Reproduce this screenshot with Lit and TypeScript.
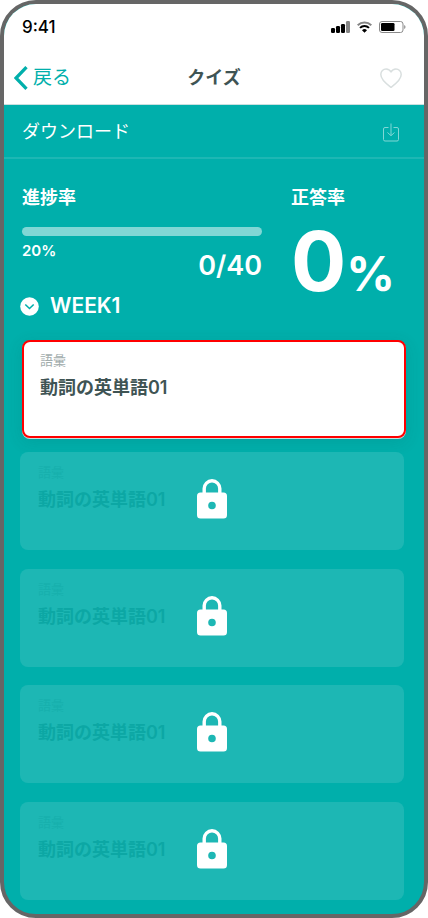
import { LitElement, html, css, svg } from "lit";
import { customElement, property } from "lit/decorators.js";

const lockIcon = svg`<svg class="lock" width="32" height="40" viewBox="0 0 32 40" aria-hidden="true">
  <path d="M8.2 15 V9.6 A7.8 7.8 0 0 1 23.8 9.6 V15" fill="none" stroke="#fff" stroke-width="3.4"/>
  <path fill="#fff" fill-rule="evenodd" d="M4.500 13.500 H27.500 A3.500 3.500 0 0 1 31 17 V36 A3.500 3.500 0 0 1 27.500 39.500 H4.500 A3.500 3.500 0 0 1 1 36 V17 A3.500 3.500 0 0 1 4.500 13.500 Z M16 22.700 a3.800 3.800 0 1 0 0 7.600 a3.800 3.800 0 1 0 0 -7.600 Z"/>
</svg>`;

@customElement("quiz-card")
export class QuizCard extends LitElement {
  @property() category = "";
  @property() name = "";
  @property({ type: Boolean, reflect: true }) locked = false;

  static styles = css`
    :host {
      display: block;
    }
    .card {
      position: relative;
      display: flex;
      flex-direction: column;
      align-items: flex-start;
      box-sizing: border-box;
      width: 100%;
      height: 98px;
      margin: 0;
      padding: 9px 16px;
      border: 2px solid #f00;
      border-radius: 8px;
      background: #fff;
      color: #3f5454;
      font-family: inherit;
      text-align: left;
      box-shadow: 0 1px 0 #c5dede, 0 4px 16px rgba(0, 80, 80, 0.14);
    }
    .category {
      color: #a2adad;
      font-size: 13px;
      line-height: 18px;
    }
    .name {
      margin-top: 6px;
      font-size: 18px;
      line-height: 26px;
      font-weight: 600;
    }
    :host([locked]) .card {
      border-color: transparent;
      background: #1db7b4;
      background-clip: border-box;
      color: #0ca7a4;
      box-shadow: none;
    }
    :host([locked]) .category {
      color: #17b0ad;
    }
    .lock {
      position: absolute;
      left: 50%;
      top: 50%;
      margin: -22px 0 0 -16px;
    }
  `;

  render() {
    return html`<button class="card" ?disabled=${this.locked}>
      <span class="category">${this.category}</span>
      <span class="name">${this.name}</span>
      ${this.locked ? lockIcon : null}
    </button>`;
  }
}

@customElement("app-root")
export class AppRoot extends LitElement {
  static styles = css`
    :host {
      display: block;
      font-family: Inter, "Noto Sans CJK JP", sans-serif;
    }
    .phone {
      display: flex;
      flex-direction: column;
      box-sizing: border-box;
      min-height: 100vh;
      border: 4px solid #666;
      border-radius: 36px;
      background: #00afab;
      color: #fff;
      overflow: hidden;
    }
    button {
      margin: 0;
      padding: 0;
      border: 0;
      background: none;
      color: inherit;
      font: inherit;
    }
    svg {
      display: block;
    }
    .status {
      display: flex;
      justify-content: space-between;
      align-items: center;
      height: 46px;
      padding: 0 18px;
      background: #fff;
      color: #000;
    }
    .time {
      font-size: 17px;
      line-height: 20px;
      font-weight: 500;
    }
    .indicators {
      display: flex;
      align-items: center;
      gap: 7px;
    }
    .nav {
      display: grid;
      grid-template-columns: 1fr auto 1fr;
      align-items: center;
      height: 52px;
      padding: 2px 10px 0;
      border-bottom: 1px solid #c9dfdf;
      background: #fff;
    }
    .back {
      display: flex;
      align-items: center;
      gap: 5px;
      color: #00afab;
      font-size: 19px;
      line-height: 28px;
    }
    h1 {
      margin: 0;
      color: #3f5454;
      font-size: 18px;
      line-height: 26px;
      font-weight: 700;
    }
    .like {
      justify-self: end;
      margin-right: 11px;
    }
    .download {
      display: flex;
      justify-content: space-between;
      align-items: center;
      height: 54px;
      padding: 2px 24px 0 18px;
      border-bottom: 2px solid #1db7b4;
      font-size: 18px;
      line-height: 26px;
      font-weight: 400;
    }
    .stats {
      display: grid;
      grid-template-columns: minmax(0, 240px) 1fr;
      column-gap: 29px;
      padding: 26px 18px 0;
    }
    h2 {
      margin: 0;
      font-size: 18px;
      line-height: 26px;
      font-weight: 600;
    }
    .track {
      height: 9px;
      margin-top: 16px;
      border-radius: 5px;
      background: #80d7d5;
    }
    .figures {
      display: flex;
      justify-content: space-between;
      align-items: flex-start;
    }
    .percent {
      margin-top: 5px;
      font-size: 15px;
      line-height: 20px;
      font-weight: 600;
    }
    .count {
      margin-top: 13px;
      font-size: 27px;
      line-height: 34px;
      font-weight: 600;
    }
    .rate {
      display: flex;
      align-items: baseline;
      height: 96px;
      font-size: 82px;
      line-height: 102px;
      font-weight: 700;
    }
    .unit {
      font-size: 48px;
    }
    .week {
      display: flex;
      align-items: center;
      gap: 11px;
      align-self: flex-start;
      margin-left: 16px;
      margin-top: -15px;
      font-size: 21px;
      line-height: 28px;
      font-weight: 600;
    }
    .current {
      margin: 20px 18px 0;
    }
    .upcoming {
      display: flex;
      flex: 1;
      flex-direction: column;
      justify-content: space-between;
      gap: 18px;
      margin: 14px 20px 14px 16px;
    }
  `;

  render() {
    return html`<main class="phone">
      <div class="status">
        <span class="time">9:41</span>
        <div class="indicators">
          <svg width="19" height="12" viewBox="0 0 19 12" aria-hidden="true">
            <rect x="0" y="7" width="4" height="5" rx="1.200" />
            <rect x="5" y="5" width="4" height="7" rx="1.200" />
            <rect x="10" y="3" width="4" height="9" rx="1.200" />
            <rect x="15" y="0" width="4" height="12" rx="1.200" fill="#858585" />
          </svg>
          <svg width="15" height="12" viewBox="0 0 15 12" fill="none" aria-hidden="true">
            <path d="M.7 4.200 A9.800 9.800 0 0 1 14.300 4.200" stroke="#858585" stroke-width="2" />
            <path d="M3 6.900 A6.400 6.400 0 0 1 12 6.900" stroke="#000" stroke-width="2" />
            <path d="M5 9.200 A3.700 3.700 0 0 1 10 9.200 L7.500 11.800 Z" fill="#000" />
          </svg>
          <svg width="27" height="12" viewBox="0 0 27 12" aria-hidden="true">
            <rect x=".5" y=".5" width="23.500" height="11" rx="2.500" fill="none" stroke="#8a8a8a" />
            <rect x="2" y="2" width="13.500" height="8" rx="1.300" />
            <path d="M25.200 4 A2.200 2.200 0 0 1 25.200 8 Z" fill="#8a8a8a" />
          </svg>
        </div>
      </div>
      <header class="nav">
        <button class="back">
          <svg width="14" height="24" viewBox="0 0 14 24" fill="none" stroke="#00afab" stroke-width="3.300" aria-hidden="true">
            <path d="M12.500 1.200 L2 12 L12.500 22.800" />
          </svg>
          戻る
        </button>
        <h1>クイズ</h1>
        <button class="like" aria-label="お気に入り">
          <svg width="24" height="22" viewBox="0 0 24 22" fill="none" stroke="#d9dfdf" stroke-width="1.500" stroke-linejoin="round" aria-hidden="true">
            <path d="M12 20.300 C10.500 19.200 1.800 13.400 1.800 7.600 C1.800 4.200 4.300 1.900 7.100 1.900 C9.200 1.900 11 3 12 5 C13 3 14.800 1.900 16.900 1.900 C19.700 1.900 22.200 4.200 22.200 7.600 C22.200 13.400 13.500 19.200 12 20.300 Z" />
          </svg>
        </button>
      </header>
      <button class="download">
        ダウンロード
        <svg width="18" height="19" viewBox="0 0 18 19" fill="none" stroke="#80d7d5" aria-hidden="true">
          <path d="M6.500 4.500 H3 A1.500 1.500 0 0 0 1.500 6 V16.500 A1.500 1.500 0 0 0 3 18 H15 A1.500 1.500 0 0 0 16.500 16.500 V6 A1.500 1.500 0 0 0 15 4.500 H11.500" />
          <path d="M9 .5 V12.500 M5.500 9.500 L9 12.700 L12.500 9.500" />
        </svg>
      </button>
      <section class="stats">
        <div>
          <h2 id="progress-label">進捗率</h2>
          <div class="track" role="progressbar" aria-labelledby="progress-label" aria-valuenow="20"></div>
          <div class="figures">
            <span class="percent">20%</span>
            <span class="count">0/40</span>
          </div>
        </div>
        <div>
          <h2>正答率</h2>
          <div class="rate">0<span class="unit">%</span></div>
        </div>
      </section>
      <button class="week" aria-expanded="true">
        <svg width="19" height="19" viewBox="0 0 19 19" aria-hidden="true">
          <circle cx="9.500" cy="9.500" r="9.300" fill="#fff" />
          <path d="M5.300 7.500 L9.500 11.500 L13.700 7.500" fill="none" stroke="#00afab" stroke-width="1.600" />
        </svg>
        WEEK1
      </button>
      <quiz-card class="current" category="語彙" name="動詞の英単語01"></quiz-card>
      <section class="upcoming">
        ${[1, 2, 3, 4].map(
          () => html`<quiz-card locked category="語彙" name="動詞の英単語01"></quiz-card>`
        )}
      </section>
    </main>`;
  }
}
